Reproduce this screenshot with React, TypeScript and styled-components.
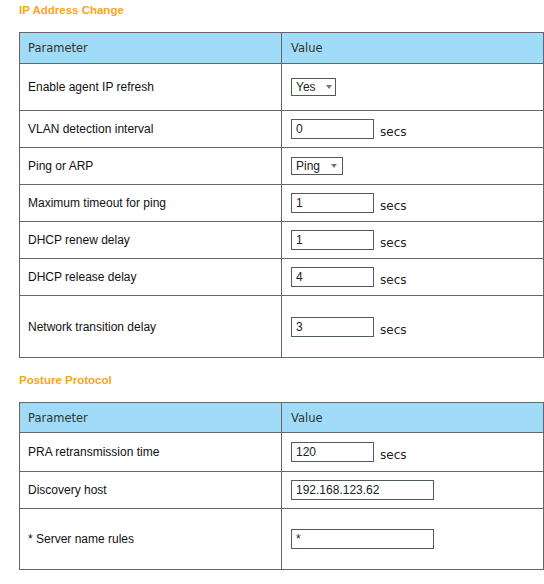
import React from "react";
import styled, { createGlobalStyle } from "styled-components";

const Global = createGlobalStyle`
  html, body { margin: 0; padding: 0; background: #ffffff; }
  body { font-family: "Liberation Sans", Arial, sans-serif; }
`;

const Page = styled.div`
  padding: 0 1px 0 19px;
  width: 544px;
  box-sizing: border-box;
`;

const Section = styled.section<{ $top?: number }>`
  margin-top: ${(p) => p.$top ?? 0}px;
`;

const Title = styled.h2`
  margin: 0 0 12px 0;
  height: 20px;
  line-height: 20px;
  font-family: "Liberation Sans", Arial, sans-serif;
  font-weight: bold;
  font-size: 11.5px;
  color: #f9a51b;
`;

const Grid = styled.div`
  display: grid;
  grid-template-columns: 262px 261px;
  border: 1px solid #666666;
  width: 525px;
  box-sizing: border-box;
`;

const Cell = styled.div<{ $h: number; $first?: boolean; $left?: boolean; $head?: boolean }>`
  height: ${(p) => p.$h}px;
  box-sizing: content-box;
  display: flex;
  align-items: center;
  border-top: ${(p) => (p.$first ? "none" : "1px solid #666666")};
  border-right: ${(p) => (p.$left ? "1px solid #666666" : "none")};
  padding-left: ${(p) => (p.$left ? 8 : 9)}px;
  background: ${(p) => (p.$head ? "#a0dcf8" : "#ffffff")};
  font-family: ${(p) =>
    p.$head ? `"DejaVu Sans", Verdana, sans-serif` : `"Liberation Sans", Arial, sans-serif`};
  font-size: ${(p) => (p.$head ? "11.5px" : "12px")};
  color: ${(p) => (p.$head ? "#333333" : "#111111")};
`;

const TextInput = styled.input<{ $w: number }>`
  width: ${(p) => p.$w}px;
  height: 20px;
  box-sizing: border-box;
  margin: 0;
  border: 1px solid #4f5a61;
  border-radius: 0;
  padding: 0 4px;
  font-family: "Liberation Sans", Arial, sans-serif;
  font-size: 12px;
  color: #222222;
  background: #ffffff;
  outline: none;
`;

const Unit = styled.span`
  margin-left: 6px;
  padding-top: 6px;
  font-family: "DejaVu Sans", Verdana, sans-serif;
  font-size: 12px;
  color: #222222;
`;

const SelectWrap = styled.span<{ $w: number; $arrow: number }>`
  position: relative;
  display: inline-block;
  width: ${(p) => p.$w}px;
  height: 18px;
  &::after {
    content: "";
    position: absolute;
    right: ${(p) => p.$arrow}px;
    top: 7px;
    width: 0;
    height: 0;
    border-left: 3.5px solid transparent;
    border-right: 3.5px solid transparent;
    border-top: 4px solid #777777;
    pointer-events: none;
  }
`;

const NativeSelect = styled.select`
  appearance: none;
  -webkit-appearance: none;
  width: 100%;
  height: 100%;
  box-sizing: border-box;
  margin: 0;
  border: 1px solid #4f5a61;
  border-radius: 0;
  padding: 0 0 0 4px;
  background: #ffffff;
  font-family: "Liberation Sans", Arial, sans-serif;
  font-size: 12px;
  color: #222222;
  outline: none;
`;

type Row =
  | { label: string; h: number; kind: "select"; value: string; options: string[]; w: number; arrow: number }
  | { label: string; h: number; kind: "input"; value: string; w: number; unit?: string };

const ipRows: Row[] = [
  { label: "Enable agent IP refresh", h: 46, kind: "select", value: "Yes", options: ["Yes", "No"], w: 45, arrow: 4 },
  { label: "VLAN detection interval", h: 36, kind: "input", value: "0", w: 83, unit: "secs" },
  { label: "Ping or ARP", h: 36, kind: "select", value: "Ping", options: ["Ping", "ARP"], w: 52, arrow: 6 },
  { label: "Maximum timeout for ping", h: 36, kind: "input", value: "1", w: 83, unit: "secs" },
  { label: "DHCP renew delay", h: 36, kind: "input", value: "1", w: 83, unit: "secs" },
  { label: "DHCP release delay", h: 36, kind: "input", value: "4", w: 83, unit: "secs" },
  { label: "Network transition delay", h: 61, kind: "input", value: "3", w: 83, unit: "secs" },
];

const postureRows: Row[] = [
  { label: "PRA retransmission time", h: 38, kind: "input", value: "120", w: 83, unit: "secs" },
  { label: "Discovery host", h: 36, kind: "input", value: "192.168.123.62", w: 143 },
  { label: "* Server name rules", h: 60, kind: "input", value: "*", w: 143 },
];

function ValueControl({ row }: { row: Row }) {
  if (row.kind === "select") {
    return (
      <SelectWrap $w={row.w} $arrow={row.arrow}>
        <NativeSelect defaultValue={row.value}>
          {row.options.map((o) => (
            <option key={o}>{o}</option>
          ))}
        </NativeSelect>
      </SelectWrap>
    );
  }
  return (
    <>
      <TextInput $w={row.w} defaultValue={row.value} />
      {row.unit && <Unit>{row.unit}</Unit>}
    </>
  );
}

function ParamTable({ rows, headH }: { rows: Row[]; headH: number }) {
  return (
    <Grid>
      <Cell $h={headH} $first $left $head>
        Parameter
      </Cell>
      <Cell $h={headH} $first $head>
        Value
      </Cell>
      {rows.map((r) => (
        <React.Fragment key={r.label}>
          <Cell $h={r.h} $left>
            {r.label}
          </Cell>
          <Cell $h={r.h}>
            <ValueControl row={r} />
          </Cell>
        </React.Fragment>
      ))}
    </Grid>
  );
}

export default function App() {
  return (
    <Page>
      <Global />
      <Section>
        <Title>IP Address Change</Title>
        <ParamTable rows={ipRows} headH={30} />
      </Section>
      <Section $top={12}>
        <Title>Posture Protocol</Title>
        <ParamTable rows={postureRows} headH={29} />
      </Section>
    </Page>
  );
}
